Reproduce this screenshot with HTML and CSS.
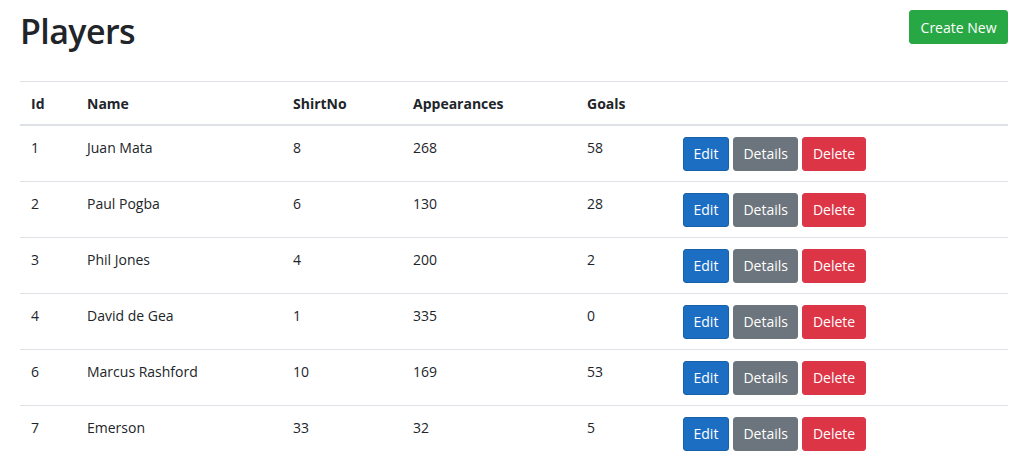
FILE: index.html
```html
<!DOCTYPE html>
<html>
<head>
<meta charset="utf-8">
<link rel="stylesheet" href="styles.css">
</head>
<body>
<div class="container">
  <div class="page-head">
    <h1 class="title">Players</h1>
    <a class="btn btn-success">Create New</a>
  </div>
  <table class="table">
    <colgroup>
      <col class="c-id"><col class="c-name"><col class="c-shirt"><col class="c-app"><col class="c-goals"><col class="c-act">
    </colgroup>
    <thead>
      <tr><th>Id</th><th>Name</th><th>ShirtNo</th><th>Appearances</th><th>Goals</th><th></th></tr>
    </thead>
    <tbody>
      <tr><td>1</td><td>Juan Mata</td><td>8</td><td>268</td><td>58</td><td><a class="btn btn-primary">Edit</a> <a class="btn btn-secondary">Details</a> <a class="btn btn-danger">Delete</a></td></tr>
      <tr><td>2</td><td>Paul Pogba</td><td>6</td><td>130</td><td>28</td><td><a class="btn btn-primary">Edit</a> <a class="btn btn-secondary">Details</a> <a class="btn btn-danger">Delete</a></td></tr>
      <tr><td>3</td><td>Phil Jones</td><td>4</td><td>200</td><td>2</td><td><a class="btn btn-primary">Edit</a> <a class="btn btn-secondary">Details</a> <a class="btn btn-danger">Delete</a></td></tr>
      <tr><td>4</td><td>David de Gea</td><td>1</td><td>335</td><td>0</td><td><a class="btn btn-primary">Edit</a> <a class="btn btn-secondary">Details</a> <a class="btn btn-danger">Delete</a></td></tr>
      <tr><td>6</td><td>Marcus Rashford</td><td>10</td><td>169</td><td>53</td><td><a class="btn btn-primary">Edit</a> <a class="btn btn-secondary">Details</a> <a class="btn btn-danger">Delete</a></td></tr>
      <tr><td>7</td><td>Emerson</td><td>33</td><td>32</td><td>5</td><td><a class="btn btn-primary">Edit</a> <a class="btn btn-secondary">Details</a> <a class="btn btn-danger">Delete</a></td></tr>
    </tbody>
  </table>
</div>
</body>
</html>
```

FILE: styles.css
```css
html { font-size: 14px; }
body {
  margin: 0;
  font-family: "Open Sans", "Noto Sans", sans-serif;
  font-size: 14px;
  line-height: 1.5;
  color: #212529;
  background: #fff;
}
.container {
  padding: 10px 16px 0 20px;
}
.page-head {
  display: flex;
  justify-content: space-between;
  align-items: flex-start;
  height: 71px;
}
.title {
  margin: 0;
  font-size: 34px;
  font-weight: 600;
  line-height: 1.2;
  letter-spacing: -0.6px;
  padding-top: 1px;
}
.btn {
  display: inline-block;
  font-size: 14px;
  line-height: 21px;
  padding: 5.5px 10px;
  border: 1px solid transparent;
  border-radius: 3px;
  color: #fff;
  text-decoration: none;
  vertical-align: middle;
}
.page-head .btn { padding-left: 10.5px; padding-right: 10.5px; }
.btn-success { background: #28a745; border-color: #28a745; }
.btn-primary { background: #1b6ec2; border-color: #1861ac; }
.btn-secondary { background: #6c757d; border-color: #6c757d; }
.btn-danger { background: #dc3545; border-color: #dc3545; }
.table {
  width: 988px;
  border-collapse: collapse;
  table-layout: fixed;
}
.c-id { width: 56px; }
.c-name { width: 206px; }
.c-shirt { width: 120px; }
.c-app { width: 174px; }
.c-goals { width: 96px; }
.c-act { width: 336px; }
.table th, .table td {
  padding: 10.5px 11px;
  text-align: left;
  vertical-align: top;
  border-top: 1px solid #dee2e6;
}
.table th {
  font-weight: 700;
  border-bottom: 2px solid #dee2e6;
}
.table td:last-child { font-size: 0; line-height: 0; }
.table td:last-child .btn { font-size: 14px; line-height: 21px; margin-right: 4px; padding-left: 9.5px; padding-right: 9.5px; }
```
